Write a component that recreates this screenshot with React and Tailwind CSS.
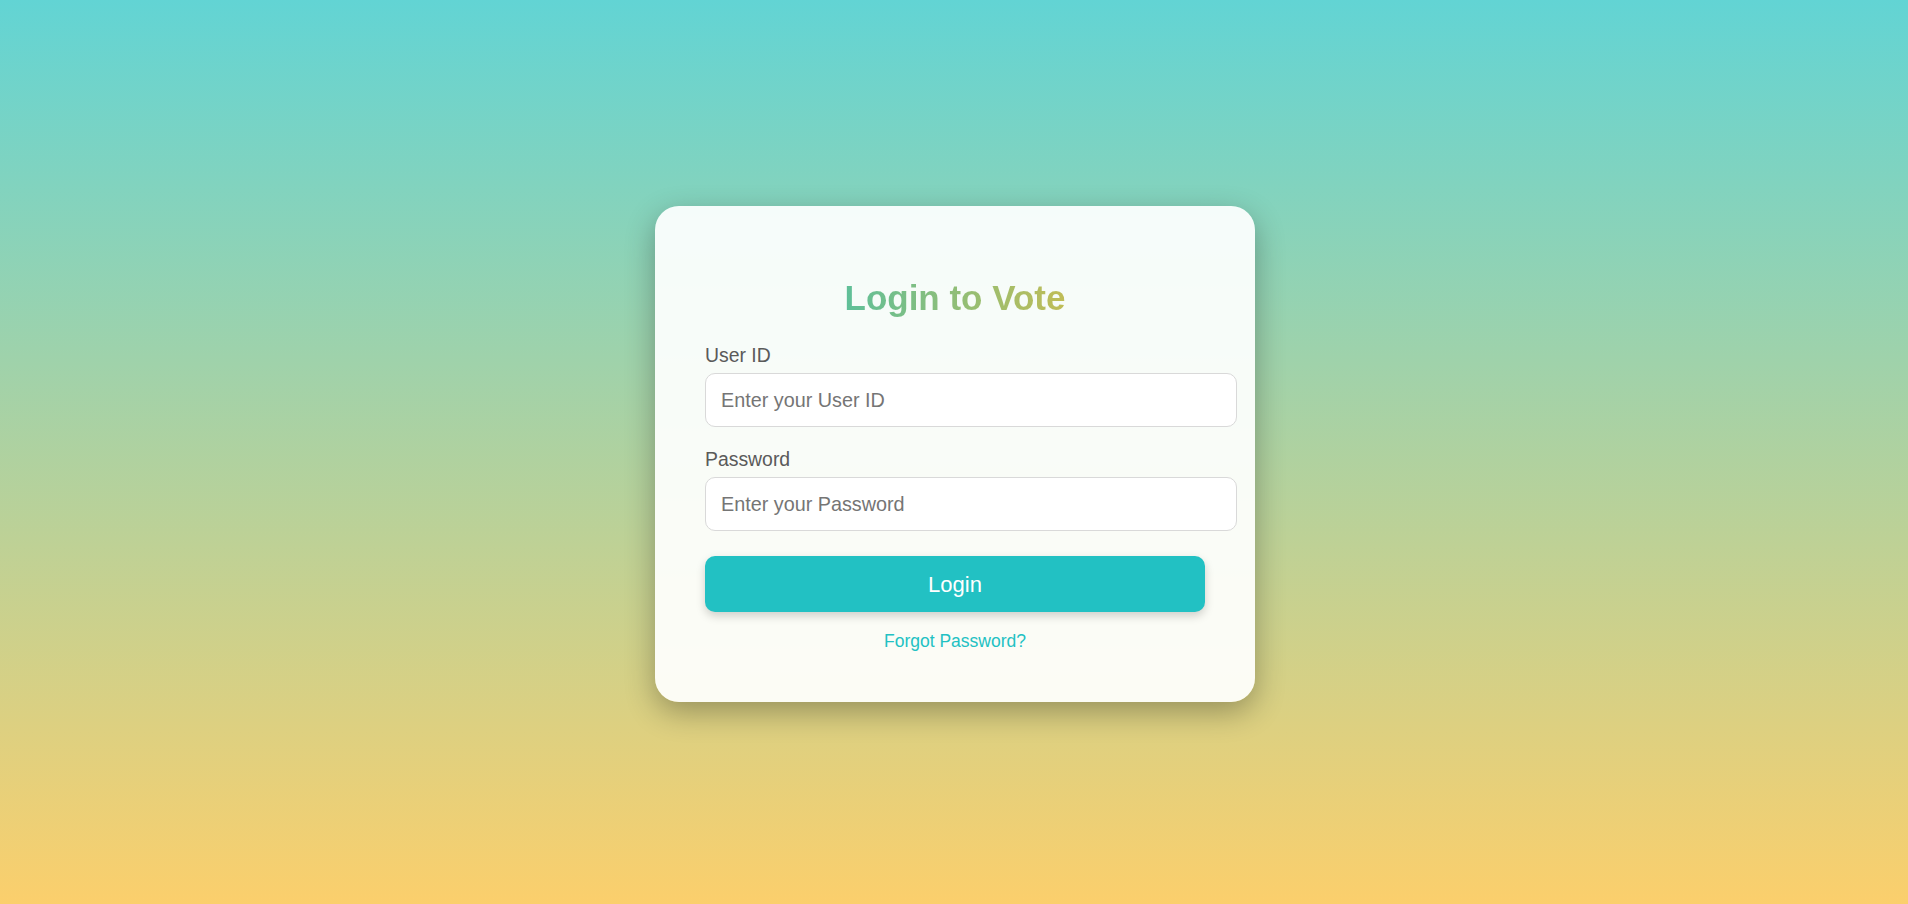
import React from "react";

export default function App() {
  return (
    <div
      className="h-[904px] w-full flex items-center justify-center pt-[4px] pl-[2px] bg-[linear-gradient(to_bottom,#62d4d4,#fbcf6c)]"
      style={{ fontFamily: '"Liberation Sans", Arial, sans-serif' }}
    >
      <div className="w-[600px] rounded-[24px] bg-white/[0.92] px-[50px] pt-[50px] pb-[51px] shadow-[0_10px_30px_rgba(0,0,0,0.3)]">
        <h2 className="mt-[22px] mb-[26px] text-center text-[35px] leading-[40px] font-bold bg-[linear-gradient(to_right,#22c1c3,#fdbb2d)] bg-clip-text text-transparent">
          Login to Vote
        </h2>
        <div className="mb-[21px]">
          <label className="block text-[19.4px] leading-[22px] text-[#5a5a5a] mb-[7px]">User ID</label>
          <input
            type="text"
            placeholder="Enter your User ID"
            className="block w-[532px] h-[54px] px-[15px] text-[19.8px] bg-white border border-[#d9d9d9] rounded-[10px] outline-none placeholder:text-[#757575]"
          />
        </div>
        <div className="mb-[25px]">
          <label className="block text-[19.4px] leading-[22px] text-[#5a5a5a] mb-[7px]">Password</label>
          <input
            type="password"
            placeholder="Enter your Password"
            className="block w-[532px] h-[54px] px-[15px] text-[19.8px] bg-white border border-[#d9d9d9] rounded-[10px] outline-none placeholder:text-[#757575]"
          />
        </div>
        <button className="block w-full h-[56px] rounded-[10px] bg-[#22c1c3] text-white text-[22px] shadow-[0_4px_10px_rgba(0,0,0,0.18)]">
          Login
        </button>
        <div className="mt-[19px] text-center text-[17.5px] leading-[20px]">
          <a href="#" className="text-[#22c1c3] no-underline">Forgot Password?</a>
        </div>
      </div>
    </div>
  );
}
